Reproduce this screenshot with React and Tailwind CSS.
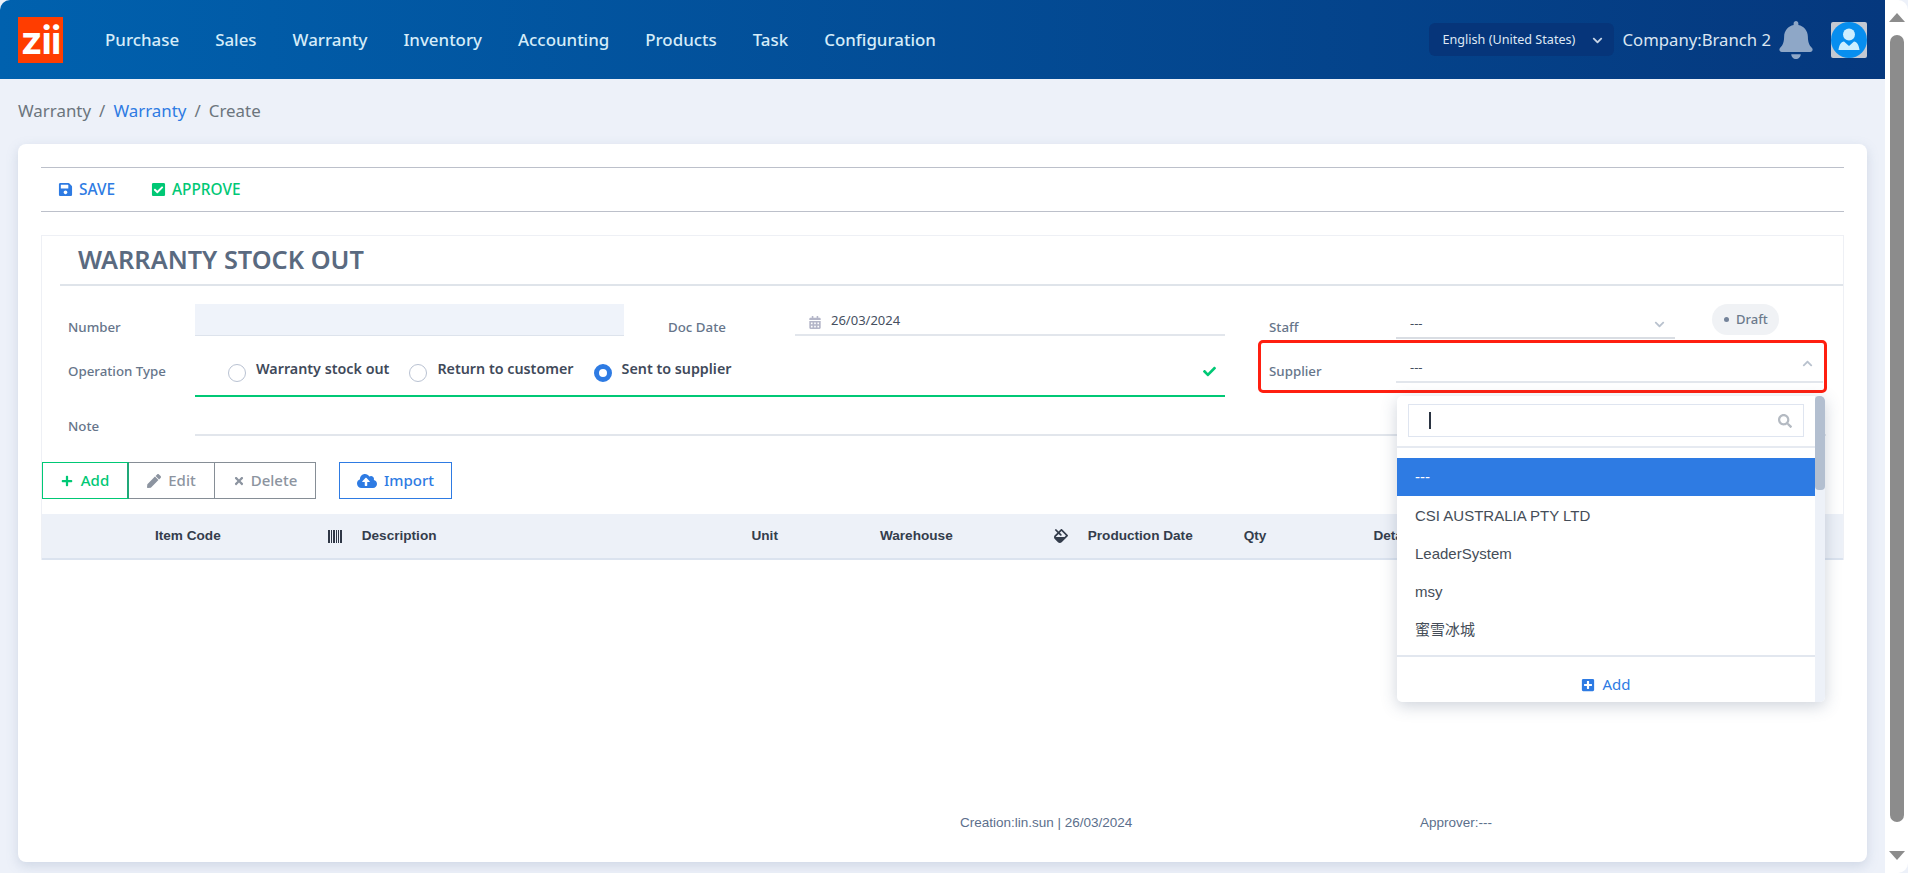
import { FaSave, FaCheckSquare, FaPlus, FaPen, FaTimes, FaCloudUploadAlt, FaFill, FaCalendarAlt, FaCheck, FaSearch, FaPlusSquare, FaBell, FaChevronDown, FaChevronUp } from 'react-icons/fa';

const NAV = ['Purchase', 'Sales', 'Warranty', 'Inventory', 'Accounting', 'Products', 'Task', 'Configuration'];

function Logo() {
  return (
    <div className="w-[45px] h-[46px] bg-[#ff3d00] flex items-center justify-center shrink-0 overflow-hidden">
      <span className="text-white font-bold text-[38px] leading-none tracking-[-1px] font-['Inter',sans-serif]">zii</span>
    </div>
  );
}

function Avatar() {
  return (
    <svg width="36" height="36" viewBox="0 0 36 36" className="shrink-0">
      <rect width="36" height="36" rx="2" fill="#c4c9d2" />
      <circle cx="18" cy="18" r="18" fill="#078eef" />
      <circle cx="18" cy="12.5" r="6" fill="#cdeeff" />
      <path d="M13 19.5 L18 24 L23 19.5 C26 20 28 23 28.5 28 L7.5 28 C8 23 10 20 13 19.5 Z" fill="#cdeeff" />
    </svg>
  );
}

function Barcode() {
  return (
    <svg width="14" height="13" viewBox="0 0 14 13" className="absolute left-[286px] top-[16px]">
      <path d="M0 0h2v13H0zM3 0h1v13H3zM5 0h2v13H5zM8 0h1v13H8zM10 0h1v13h-1zM12 0h2v13h-2z" fill="#2f3746" />
    </svg>
  );
}

function Header() {
  return (
    <header className="h-[79px] flex items-center pl-[18px] pr-[18px] bg-gradient-to-r from-[#0061ae] to-[#05387e] rounded-tl-[10px] shrink-0">
      <Logo />
      <nav className="flex gap-[36px] ml-[42px] text-[#d5ecf9] text-[16.9px] font-medium">
        {NAV.map((n) => (
          <span key={n}>{n}</span>
        ))}
      </nav>
      <div className="ml-auto flex items-center">
        <div className="w-[185px] h-[33px] rounded-[6px] bg-[#06357a] flex items-center justify-between pl-[14px] pr-[11px] pt-[1px] text-[12.6px] text-[#dfe8f4]">
          <span>English (United States)</span>
          <FaChevronDown className="w-[11px] h-[11px] text-[#c7d4e6]" />
        </div>
        <span className="ml-[9px] text-[16.7px] text-[#dbe6f2]">Company:Branch 2</span>
        <FaBell className="ml-[8px] w-[34px] h-[38px] text-[#8ea7c7]" />
        <div className="ml-[18px]">
          <Avatar />
        </div>
      </div>
    </header>
  );
}

function Label({ children, className = '' }) {
  return <span className={`text-[13.3px] font-medium text-[#66758a] shrink-0 ${className}`}>{children}</span>;
}

function Radio({ checked, label, className = '' }) {
  return (
    <div className={`flex items-start gap-[10px] ${className}`}>
      {checked ? (
        <span className="w-[18px] h-[18px] mt-[5px] rounded-full border-[5px] border-[#2e7be3] bg-white shrink-0" />
      ) : (
        <span className="w-[18px] h-[18px] mt-[5px] rounded-full border border-[#b9c2d2] bg-white shrink-0" />
      )}
      <span className="text-[14.3px] font-semibold text-[#3f4a5a] leading-[20px]">{label}</span>
    </div>
  );
}

function Toolbar() {
  return (
    <div className="h-[45px] border-y border-[#bcc0ca] flex items-center pl-[17px] text-[15.4px] font-medium shrink-0">
      <span className="flex items-center text-[#2e7be3]">
        <FaSave className="w-[15px] h-[15px] mr-[6px]" />
        SAVE
      </span>
      <span className="flex items-center text-[#00c875] ml-[36px]">
        <FaCheckSquare className="w-[15px] h-[15px] mr-[6px]" />
        APPROVE
      </span>
    </div>
  );
}

function FormRows() {
  return (
    <div className="relative">
      {/* Number / Doc Date / Staff */}
      <div className="flex h-[35px] mt-[18px]">
        <Label className="w-[127px] ml-[26px] pt-[14px]">Number</Label>
        <div className="w-[429px] h-[32px] bg-[#eff3fa] border-b border-[#dde3ec]" />
        <Label className="w-[127px] ml-[44px] pt-[14px]">Doc Date</Label>
        <div className="w-[430px] h-[32px] border-b-2 border-[#e2e6ec] flex items-center pl-[14px] pt-[4px] text-[13px] text-[#46505f]">
          <FaCalendarAlt className="w-[12px] h-[13px] text-[#b4b6c8] mr-[10px] mt-[3px]" />
          26/03/2024
        </div>
        <Label className="w-[127px] ml-[44px] pt-[14px]">Staff</Label>
        <div className="w-[279px] h-[35px] border-b-2 border-[#d9dde3] flex justify-between pl-[14px] pr-[10px] pt-[10px] text-[13px] text-[#46505f]">
          <span>---</span>
          <FaChevronDown className="w-[11px] h-[11px] text-[#b9c2ce] mt-[5px]" />
        </div>
        <div className="w-[67px] h-[31px] ml-[37px] rounded-full bg-[#f0f2f5] flex items-center pl-[12px] gap-[7px] text-[13px] font-medium text-[#6c7a8c]">
          <span className="w-[5px] h-[5px] rounded-full bg-[#74839a]" />
          Draft
        </div>
      </div>

      {/* Operation Type / Supplier */}
      <div className="flex h-[58px]">
        <Label className="w-[127px] ml-[26px] pt-[23px]">Operation Type</Label>
        <div className="w-[1030px] h-[58px] border-b-2 border-[#00c875] flex items-start pl-[33px] pt-[20px] relative">
          <Radio label="Warranty stock out" />
          <Radio label="Return to customer" className="ml-[20px]" />
          <Radio checked label="Sent to supplier" className="ml-[20px]" />
          <FaCheck className="ml-auto mr-[8px] mt-[6px] w-[15px] h-[13px] text-[#00c875]" />
        </div>
        <Label className="w-[127px] ml-[44px] pt-[23px]">Supplier</Label>
        <div className="w-[427px] h-[44px] border-b-2 border-[#e2e6ec] flex justify-between pl-[14px] pr-[10px] pt-[19px] text-[13px] text-[#46505f]">
          <span>---</span>
          <FaChevronUp className="w-[11px] h-[11px] text-[#b9c2ce] mt-[0px]" />
        </div>
      </div>

      {/* Note */}
      <div className="flex h-[39px]">
        <Label className="w-[127px] ml-[26px] pt-[20px]">Note</Label>
        <div className="w-[1631px] h-[39px] border-b-2 border-[#e2e6ec]" />
      </div>
    </div>
  );
}

function ActionButtons() {
  return (
    <div className="flex h-[37px] mt-[26px] text-[15px] font-medium">
      <span className="w-[87px] flex items-center justify-center border border-r-2 border-[#00c875] border-r-[#20a878] text-[#00c875] gap-[8px]">
        <FaPlus className="w-[12px] h-[12px]" />
        Add
      </span>
      <span className="w-[86px] flex items-center justify-center border border-l-0 border-[#868e96] text-[#8c94a0] gap-[7px]">
        <FaPen className="w-[14px] h-[14px]" />
        Edit
      </span>
      <span className="w-[101px] flex items-center justify-center border border-l-0 border-[#868e96] text-[#8c94a0] gap-[6px]">
        <FaTimes className="w-[12px] h-[12px]" />
        Delete
      </span>
      <span className="w-[113px] ml-[23px] flex items-center justify-center border border-[#2e7be3] text-[#2e7be3] gap-[7px]">
        <FaCloudUploadAlt className="w-[20px] h-[20px]" />
        Import
      </span>
    </div>
  );
}

function TableHead() {
  const cols = [
    ['Item Code', 'ml-[113px]'],
    ['Description', 'ml-[141px]'],
    ['Unit', 'ml-[315px]'],
    ['Warehouse', 'ml-[102px]'],
    ['Production Date', 'ml-[135px]'],
    ['Qty', 'ml-[51px]'],
    ['Detail', 'ml-[107px]'],
  ];
  return (
    <div className="relative h-[46px] mt-[15px] bg-[#edf1f8] border-b-2 border-[#dbe3ef] flex items-center text-[13.6px] font-bold text-[#343d4c] font-['Liberation_Sans',sans-serif]">
      {cols.map(([t, ml]) => (
        <span key={t} className={`shrink-0 ${ml}`}>
          {t}
        </span>
      ))}
      <Barcode />
      <FaFill className="absolute left-[1012px] top-[15px] w-[14px] h-[14px] text-[#343d4c]" />
    </div>
  );
}

function SupplierDropdown() {
  return (
    <div className="absolute left-[1379px] top-[252px] w-[428px] h-[306px] z-10 bg-white rounded-[5px] shadow-[0_4px_16px_rgba(60,80,110,0.25)] overflow-hidden flex">
      <div className="w-[418px] flex flex-col">
        <div className="h-[53px] border-b-2 border-[#e6eaf1] pl-[11px] pr-[11px] pt-[8px]">
          <div className="h-[33px] border border-[#dfe5f0] flex items-center justify-between pl-[20px] pr-[11px]">
            <span className="w-[2px] h-[17px] bg-[#2b3442]" />
            <FaSearch className="w-[14px] h-[14px] text-[#b4bac2]" />
          </div>
        </div>
        <div className="mt-[10px] flex flex-col text-[15px] text-[#454d58] font-['Liberation_Sans','Noto_Sans_CJK_SC',sans-serif]">
          <div className="h-[38px] flex items-center pl-[18px] bg-[#2e7be3] text-white">---</div>
          <div className="h-[39px] flex items-center pl-[18px]">CSI AUSTRALIA PTY LTD</div>
          <div className="h-[38px] flex items-center pl-[18px]">LeaderSystem</div>
          <div className="h-[38px] flex items-center pl-[18px]">msy</div>
          <div className="h-[38px] flex items-center pl-[18px]">蜜雪冰城</div>
        </div>
        <div className="mt-[6px] border-t-2 border-[#e2e7ef] h-[47px] flex items-center justify-center gap-[7px] pt-[10px] text-[15px] text-[#2e7be3]">
          <FaPlusSquare className="w-[14px] h-[14px]" />
          Add
        </div>
      </div>
      <div className="w-[10px] bg-[#edf1f8]">
        <div className="h-[94px] bg-[#b3bfd0] rounded-[4px]" />
      </div>
    </div>
  );
}

function Scrollbar() {
  return (
    <div className="w-[23px] bg-white rounded-r-[10px] flex flex-col items-center shrink-0">
      <span className="mt-[13px] w-0 h-0 border-x-[8px] border-x-transparent border-b-[9px] border-b-[#8c8c8c]" />
      <div className="mt-[13px] w-[14px] h-[787px] bg-[#8c8c8c] rounded-full" />
      <span className="mt-[29px] w-0 h-0 border-x-[8px] border-x-transparent border-t-[9px] border-t-[#8c8c8c]" />
    </div>
  );
}

export default function App() {
  return (
    <div className="flex w-[1908px] h-[873px] overflow-hidden bg-[#edf1f9] font-['Noto_Sans',sans-serif]">
      <div className="w-[1885px] flex flex-col">
        <Header />
        <div className="h-[65px] flex items-center pl-[18px] pb-[2px] gap-[8px] text-[16.9px] text-[#6c757d] shrink-0">
          <span>Warranty</span>
          <span>/</span>
          <span className="text-[#2e7be3]">Warranty</span>
          <span>/</span>
          <span>Create</span>
        </div>

        <div className="relative w-[1849px] h-[718px] ml-[18px] bg-white rounded-[8px] shadow-[0_4px_12px_rgba(120,140,170,0.25)] pt-[23px] px-[23px] flex flex-col">
          <Toolbar />

          <div className="mt-[23px] border-x border-t border-[#eef0f5]">
            <div className="h-[50px] ml-[18px] flex items-center pl-[18px] border-b-2 border-[#dfe4ea]">
              <h1 className="text-[25.3px] font-semibold text-[#5a6a80]">WARRANTY STOCK OUT</h1>
            </div>
            <FormRows />
            <ActionButtons />
            <TableHead />
          </div>

          <SupplierDropdown />

          {/* annotation around the supplier field */}
          <div className="absolute left-[1240px] top-[196px] w-[569px] h-[53px] border-[3px] border-[#ff1f10] rounded-[5px] pointer-events-none" />

          <div className="mt-auto mb-[29px] flex text-[13.5px] text-[#5c6f8c] font-['Liberation_Sans',sans-serif]">
            <span className="ml-[919px] w-[460px]">Creation:lin.sun | 26/03/2024</span>
            <span>Approver:---</span>
          </div>
        </div>
      </div>
      <Scrollbar />
    </div>
  );
}
